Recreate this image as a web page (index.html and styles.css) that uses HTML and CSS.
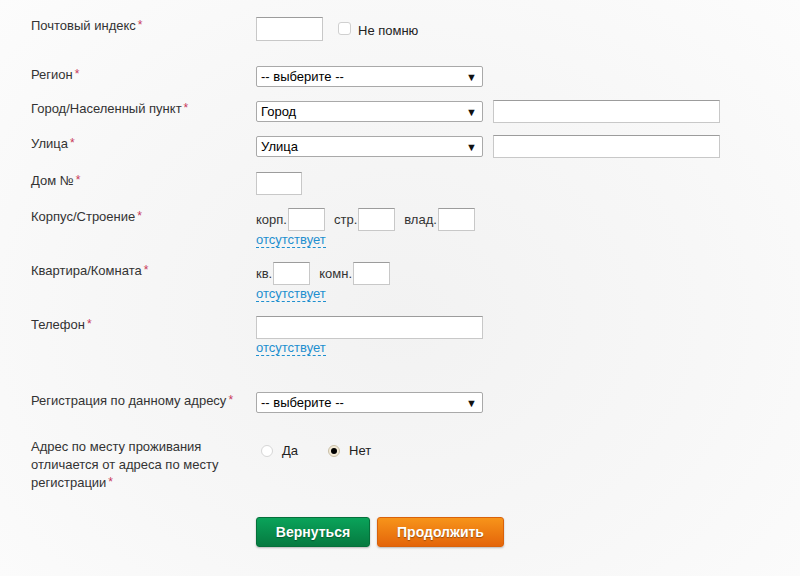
FILE: index.html
```html
<!DOCTYPE html>
<html lang="ru">
<head>
<meta charset="utf-8">
<link rel="stylesheet" href="styles.css">
</head>
<body>
<form class="form">
  <div class="row r-index">
    <div class="label">Почтовый индекс<span class="req">*</span></div>
    <div class="field inline">
      <input class="input w-index" type="text">
      <label class="check"><span class="box"></span>Не помню</label>
    </div>
  </div>
  <div class="row r-region">
    <div class="label">Регион<span class="req">*</span></div>
    <div class="field"><div class="select"><span>-- выберите --</span><span class="arrow">▼</span></div></div>
  </div>
  <div class="row r-city">
    <div class="label">Город/Населенный пункт<span class="req">*</span></div>
    <div class="field inline gap10">
      <div class="select"><span>Город</span><span class="arrow">▼</span></div>
      <input class="input w-wide" type="text">
    </div>
  </div>
  <div class="row r-street">
    <div class="label">Улица<span class="req">*</span></div>
    <div class="field inline gap10">
      <div class="select"><span>Улица</span><span class="arrow">▼</span></div>
      <input class="input w-wide" type="text">
    </div>
  </div>
  <div class="row r-house">
    <div class="label">Дом №<span class="req">*</span></div>
    <div class="field"><input class="input w-house" type="text"></div>
  </div>
  <div class="row r-korp">
    <div class="label">Корпус/Строение<span class="req">*</span></div>
    <div class="field">
      <div class="inline">
        <span class="pre">корп.</span><input class="input w-small" type="text">
        <span class="pre sp">стр.</span><input class="input w-small" type="text">
        <span class="pre sp">влад.</span><input class="input w-small" type="text">
      </div>
      <a class="absent">отсутствует</a>
    </div>
  </div>
  <div class="row r-flat">
    <div class="label">Квартира/Комната<span class="req">*</span></div>
    <div class="field">
      <div class="inline">
        <span class="pre">кв.</span><input class="input w-small" type="text">
        <span class="pre sp">комн.</span><input class="input w-small" type="text">
      </div>
      <a class="absent">отсутствует</a>
    </div>
  </div>
  <div class="row r-phone">
    <div class="label">Телефон<span class="req">*</span></div>
    <div class="field">
      <input class="input w-phone" type="text">
      <a class="absent">отсутствует</a>
    </div>
  </div>
  <div class="row r-reg">
    <div class="label">Регистрация по данному адресу<span class="req">*</span></div>
    <div class="field"><div class="select"><span>-- выберите --</span><span class="arrow">▼</span></div></div>
  </div>
  <div class="row r-addr">
    <div class="label narrow">Адрес по месту проживания отличается от адреса по месту регистрации<span class="req">*</span></div>
    <div class="field inline radios">
      <label class="radio"><span class="dot"></span>Да</label>
      <label class="radio on"><span class="dot"></span>Нет</label>
    </div>
  </div>
  <div class="buttons">
    <button type="button" class="btn green">Вернуться</button>
    <button type="button" class="btn orange">Продолжить</button>
  </div>
</form>
</body>
</html>
```
FILE: styles.css
```css
html, body { margin: 0; padding: 0; }
body {
  width: 800px;
  height: 576px;
  overflow: hidden;
  font-family: Arial, "Liberation Sans", sans-serif;
  font-size: 13px;
  color: #333;
  background: radial-gradient(ellipse 70% 80% at 50% 55%, #f2f2f2 0%, #f7f7f7 55%, #fcfcfc 100%);
}
.form { padding: 17px 0 0 31px; }
.row { display: flex; align-items: flex-start; }
.label {
  width: 225px;
  flex: none;
  line-height: 16px;
  padding-top: 1px;
  color: #333;
}
.label.narrow { width: 205px; margin-right: 20px; line-height: 18px; padding-top: 0; margin-top: -2px; }
.req { color: #c8385a; margin-left: 2px; font-size: 12px; line-height: 1; vertical-align: 1px; }
.field { display: flex; flex-direction: column; align-items: flex-start; }
.inline { display: flex; flex-direction: row; align-items: center; }
.gap10 { gap: 10px; }
.input {
  box-sizing: border-box;
  height: 23px;
  margin: 0;
  padding: 0 4px;
  background: #fff;
  border: 1px solid #c8c8c8;
  border-top-color: #9c9c9c;
  border-radius: 0;
  font: inherit;
}
.w-index { width: 67px; height: 24px; }
.w-wide { width: 227px; }
.w-house { width: 46px; }
.w-small { width: 37px; }
.w-phone { width: 227px; }
.select {
  box-sizing: border-box;
  width: 227px;
  height: 21px;
  display: flex;
  align-items: center;
  justify-content: space-between;
  padding: 0 5px 0 4px;
  background: #fff;
  border: 1px solid #a9a9a9;
  border-radius: 2px;
  color: #000;
  font-size: 13px;
}
.arrow { font-size: 11px; color: #111; }
.check {
  display: flex;
  align-items: center;
  margin-left: 15px;
  margin-top: 3px;
  color: #222;
}
.box {
  width: 11px;
  height: 11px;
  border: 1px solid #d0d0d0;
  border-radius: 3px;
  background: #fff;
  margin-right: 7px;
  margin-top: -5px;
}
.pre { margin-right: 1px; color: #333; }
.pre.sp { margin-left: 9px; }
.absent {
  color: #1e8fcf;
  border-bottom: 1px dashed #1e8fcf;
  line-height: 14px;
  margin-top: 2px;
}
.r-index { height: 49px; }
.r-region { height: 34px; }
.r-city { height: 35px; }
.r-street { height: 37px; }
.r-house { height: 36px; }
.r-korp { height: 54px; }
.r-flat { height: 54px; }
.r-phone { height: 76px; }
.r-reg { height: 48px; }
.r-addr { height: 77px; }
.radios { padding-top: 3px; padding-left: 5px; }
.radio { display: flex; align-items: center; color: #222; margin-right: 30px; }
.dot {
  box-sizing: border-box;
  width: 12px;
  height: 12px;
  border-radius: 50%;
  border: 1px solid #d6d6d6;
  background: #fff;
  margin-right: 9px;
  position: relative;
}
.radio.on .dot { background: #f3ead6; border-color: #c9bfa8; }
.radio.on .dot::after {
  content: "";
  position: absolute;
  left: 2px;
  top: 2px;
  width: 6px;
  height: 6px;
  border-radius: 50%;
  background: #000;
}
.buttons { display: flex; gap: 7px; padding-left: 225px; }
.btn {
  height: 30px;
  border-radius: 3px;
  font-family: Arial, "Liberation Sans", sans-serif;
  font-weight: bold;
  font-size: 14px;
  color: #fff;
  text-shadow: 0 1px 1px rgba(0,0,0,0.35);
  cursor: pointer;
  padding: 0;
}
.green {
  width: 114px;
  background: linear-gradient(#0aa35a, #067a40);
  border: 1px solid #05703a;
  box-shadow: 0 1px 2px rgba(0,0,0,0.25);
}
.orange {
  width: 127px;
  background: linear-gradient(#f7941a, #e4650a);
  border: 1px solid #d9620b;
  box-shadow: 0 1px 2px rgba(0,0,0,0.25);
}
```
